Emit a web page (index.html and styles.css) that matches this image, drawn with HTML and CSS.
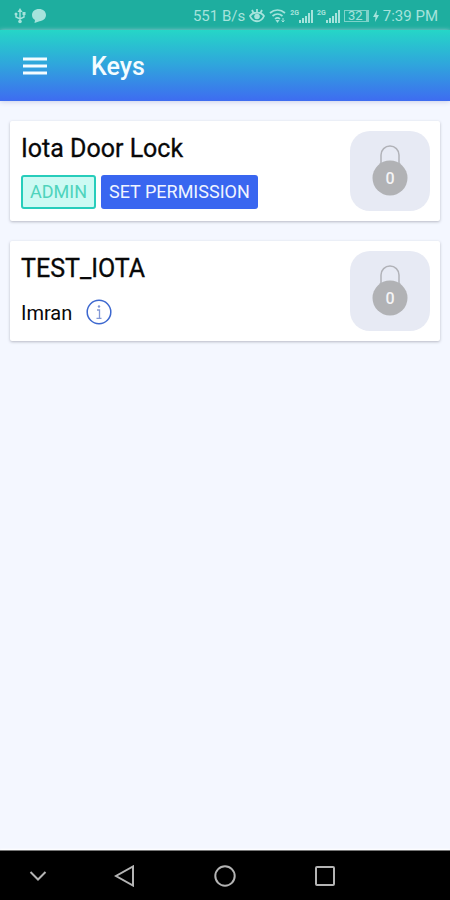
FILE: index.html
```html
<!DOCTYPE html>
<html lang="en">
<head>
<meta charset="utf-8">
<meta name="viewport" content="width=device-width, initial-scale=1">
<title>Keys</title>
<link rel="stylesheet" href="styles.css">
</head>
<body>
<div class="status">
  <svg class="usb" width="12" height="16" viewBox="0 0 12 16" aria-hidden="true"><path d="M6 3v10M2 6v3l4 2 4-2V5" fill="none" stroke="currentColor" stroke-width="1.4"/><path d="M6 0l2.5 4h-5z" fill="currentColor"/><circle cx="6" cy="13.5" r="1.8" fill="currentColor"/><circle cx="2" cy="6" r="1.5" fill="currentColor"/><path d="M8.5 4h3v3h-3z" fill="currentColor"/></svg>
  <svg class="chat" width="16" height="16" viewBox="0 0 16 16" aria-hidden="true"><path d="M8 1c4.200 0 7 2.600 7 6s-2.800 6-6.500 6.200L3.500 15l.5-3C2 11 1 9.200 1 7c0-3.400 2.800-6 7-6z" fill="currentColor"/></svg>
  <span class="speed">551 B/s</span>
  <svg width="16" height="16" viewBox="0 0 16 16" aria-hidden="true"><path d="M1 8c3-4.500 11-4.500 14 0-3 7-11 7-14 0zM8 1v3M3 2l1.500 3M13 2l-1.500 3" fill="none" stroke="currentColor" stroke-width="1.800"/><circle cx="8" cy="8.500" r="2.800" fill="currentColor"/></svg>
  <svg width="17" height="16" viewBox="0 0 17 16" aria-hidden="true"><path d="M1 5c4.500-4 10.500-4 15 0M3.500 8c3-2.600 7-2.600 10 0M6 11c1.500-1.400 3.500-1.400 5 0" fill="none" stroke="currentColor" stroke-width="1.700"/><path d="M6.500 12h4L8.500 15z" fill="currentColor"/><path d="M14 10v4M12.500 12.500L14 14l1.500-1.500" fill="none" stroke="currentColor"/></svg>
  <span class="signal"><small>2G</small><svg width="14" height="15" viewBox="0 0 14 15" aria-hidden="true"><path d="M0 11h2v3H0zM3 9h2v5H3zM6 7h2v7H6zM9 4h2v10H9zM12 1h2v13h-2z" fill="currentColor"/></svg></span>
  <span class="signal"><small>2G</small><svg width="14" height="15" viewBox="0 0 14 15" aria-hidden="true"><path d="M0 11h2v3H0zM3 9h2v5H3zM6 7h2v7H6zM9 4h2v10H9zM12 1h2v13h-2z" fill="currentColor"/></svg></span>
  <span class="battery">32</span>
  <svg class="bolt" width="6" height="12" viewBox="0 0 6 12" aria-hidden="true"><path d="M4 0L0 7h2.500L2 12l4-7H3.500z" fill="currentColor"/></svg>
  <span class="time">7:39 PM</span>
</div>
<header class="bar">
  <button class="menu" aria-label="Menu"><svg width="24" height="18" viewBox="0 0 24 18"><path d="M0 2h24M0 9h24M0 16h24" stroke="currentColor" stroke-width="3"/></svg></button>
  <h1>Keys</h1>
</header>
<main>
  <article class="card">
    <div class="info">
      <h2>Iota Door Lock</h2>
      <div class="row">
        <button class="tag admin">ADMIN</button>
        <button class="tag permission">SET PERMISSION</button>
      </div>
    </div>
    <button class="lock" aria-label="Lock 0"><svg width="36" height="54" viewBox="0 0 36 54"><path d="M9 22V11a9 9 0 0 1 18 0v11" fill="none" stroke="#b1b2b8" stroke-width="1.500"/><circle cx="18" cy="34" r="17.500" fill="#b1b2b5"/><text x="18" y="40" text-anchor="middle">0</text></svg></button>
  </article>
  <article class="card">
    <div class="info">
      <h2>TEST_IOTA</h2>
      <div class="row">
        <span class="owner">Imran</span>
        <button class="about" aria-label="Information"><svg width="26" height="26" viewBox="0 0 26 26"><circle cx="13" cy="13" r="11.800" fill="none" stroke="#3d68cf" stroke-width="1.500"/><path d="M11 11h2.500v8M10.500 19.300h5" fill="none" stroke="#8298d6" stroke-width="1.300"/><circle cx="13" cy="7.500" r="1.200" fill="#8298d6"/></svg></button>
      </div>
    </div>
    <button class="lock" aria-label="Lock 0"><svg width="36" height="54" viewBox="0 0 36 54"><path d="M9 22V11a9 9 0 0 1 18 0v11" fill="none" stroke="#b1b2b8" stroke-width="1.500"/><circle cx="18" cy="34" r="17.500" fill="#b1b2b5"/><text x="18" y="40" text-anchor="middle">0</text></svg></button>
  </article>
</main>
<nav class="system">
  <button aria-label="Hide navigation"><svg width="22" height="22" viewBox="0 0 22 22"><path d="M3.500 7l7.500 7.500L18.500 7"/></svg></button>
  <button aria-label="Back"><svg width="22" height="22" viewBox="0 0 22 22"><path d="M19 1.500v19L2 11z"/></svg></button>
  <button aria-label="Home"><svg width="22" height="22" viewBox="0 0 22 22"><circle cx="11" cy="11" r="9.700"/></svg></button>
  <button aria-label="Recent apps"><svg width="22" height="22" viewBox="0 0 22 22"><rect x="2" y="2" width="18" height="18" rx="1"/></svg></button>
</nav>
</body>
</html>
```
FILE: styles.css
```css
* {
  box-sizing: border-box;
}

body {
  margin: 0;
  min-height: 100vh;
  display: flex;
  flex-direction: column;
  background: #f4f7ff;
  color: #080808;
  font-family: Roboto, "Liberation Sans", sans-serif;
}

button {
  margin: 0;
  padding: 0;
  border: 0;
  background: none;
  color: inherit;
  font: inherit;
}

svg {
  display: block;
  flex: none;
}

.status {
  display: flex;
  align-items: center;
  gap: 4px;
  height: 30px;
  padding: 2px 12px 0 14px;
  background: #1eae9f;
  color: #a6e3dc;
  font-size: 15px;
  line-height: 20px;
  white-space: nowrap;
}

.chat {
  margin-left: 1px;
}

.speed {
  margin-left: auto;
}

.signal {
  display: flex;
}

.signal small {
  font-size: 7px;
  line-height: 8px;
  font-weight: 700;
}

.battery {
  width: 25px;
  height: 12px;
  border: 1px solid #7fd3ca;
  border-right-width: 3px;
  font-size: 13px;
  line-height: 10px;
  text-align: center;
}

.bar {
  display: flex;
  align-items: center;
  gap: 44px;
  height: 71px;
  padding: 0 23px;
  background: linear-gradient(#25d6c7, #2fa6dc 48%, #3e6cf1);
  color: #f4fcff;
  box-shadow: 0 1px 5px #ccd0e8;
}

h1,
h2 {
  margin: 0;
  font-weight: 500;
}

h1 {
  padding-top: 3px;
  font-size: 25px;
  line-height: 32px;
}

main {
  flex: 1;
  display: flex;
  flex-direction: column;
  gap: 20px;
  padding: 20px 10px;
}

.card {
  display: flex;
  justify-content: space-between;
  padding: 10px;
  background: #fff;
  border-radius: 2px;
  box-shadow: 0 1px 3px #b6b9c4;
}

h2 {
  font-size: 25px;
  font-weight: 400;
  line-height: 36px;
  -webkit-text-stroke: 0.3px currentColor;
}

.row {
  display: flex;
  align-items: center;
  gap: 5px;
  height: 34px;
  margin-top: 8px;
}

.info {
  padding-left: 1px;
}

.tag {
  height: 34px;
  border-radius: 3px;
  font-size: 18px;
  line-height: 30px;
  white-space: nowrap;
}

.admin {
  padding: 0 7px;
  border: 2px solid #27cdbb;
  background: #cdfaf3;
  color: #4fd3bc;
}

.permission {
  padding: 0 8px;
  background: #3966f0;
  color: #f0f4ff;
}

.owner {
  padding-top: 2px;
  font-size: 20px;
  line-height: 24px;
}

.about {
  margin-left: 9px;
}

.lock {
  display: grid;
  place-items: center;
  width: 80px;
  height: 80px;
  border-radius: 20px;
  background: #e7eaf4;
}

.lock text {
  fill: #f4f4f6;
  font-size: 16px;
  font-weight: 500;
}

.system {
  display: grid;
  grid-template-columns: 3fr 4fr 4fr 4fr 3fr;
  height: 50px;
  border-top: 1px solid #777;
  background: #000;
  box-shadow: 0 -1px 2px #fff;
}

.system button {
  display: grid;
  place-items: center;
}

.system svg {
  fill: none;
  stroke: #b4b4b4;
  stroke-width: 2;
}
```
